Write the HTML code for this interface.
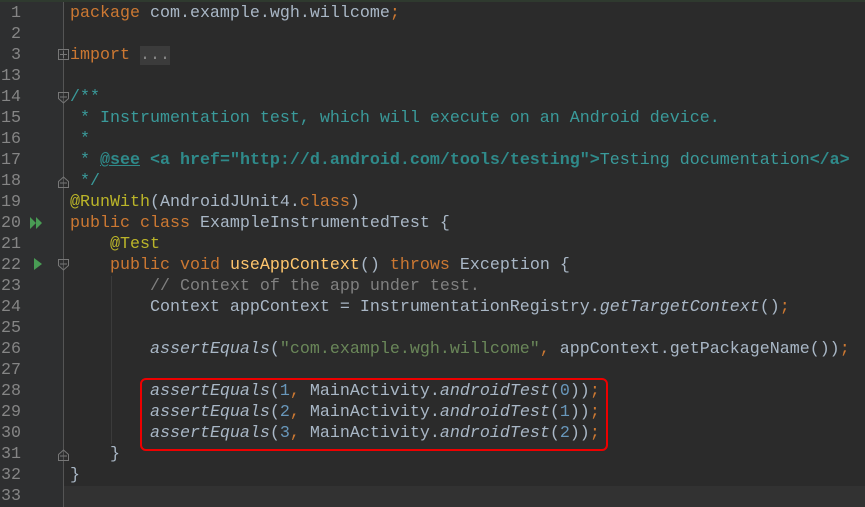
<!DOCTYPE html>
<html><head><style>
body{margin:0;width:865px;height:507px;background:#2b2b2b;overflow:hidden;position:relative;font-family:"Liberation Mono",monospace;font-size:16.67px}
#top{position:absolute;left:0;top:0;width:865px;height:2px;background:#2f3a2f}
#gut{position:absolute;left:0;top:2px;width:63px;height:505px;background:#2e2f30}
#sep{position:absolute;left:63px;top:2px;width:1px;height:505px;background:#555}
#hl{position:absolute;left:64px;top:486px;width:801px;height:21px;background:#323232}
.n{position:absolute;left:0;width:21px;text-align:right;color:#858585;line-height:21px;font-size:16.67px}
.l{position:absolute;left:70px;line-height:21px;white-space:pre;color:#a9b7c6}
.k{color:#cc7832}.d{color:#3a9a9a}.t{color:#2f8a8a;font-weight:bold}.a{color:#bbb529}.c{color:#808080}.i{font-style:italic}.s{color:#6a8759}.num{color:#6897bb}.f{color:#ffc66d}
#box{position:absolute;left:140px;top:378px;width:464px;height:69px;border:2px solid #e00;border-radius:6px}
.ig{position:absolute;width:1px;background:#3b3b3b}
</style></head><body>
<div id="top"></div><div id="gut"></div><div id="hl"></div><div id="sep"></div>
<div class="ig" style="left:111px;top:276px;height:168px"></div>
<div class="n" style="top:3px">1</div>
<div class="n" style="top:24px">2</div>
<div class="n" style="top:45px">3</div>
<div class="n" style="top:66px">13</div>
<div class="n" style="top:87px">14</div>
<div class="n" style="top:108px">15</div>
<div class="n" style="top:129px">16</div>
<div class="n" style="top:150px">17</div>
<div class="n" style="top:171px">18</div>
<div class="n" style="top:192px">19</div>
<div class="n" style="top:213px">20</div>
<div class="n" style="top:234px">21</div>
<div class="n" style="top:255px">22</div>
<div class="n" style="top:276px">23</div>
<div class="n" style="top:297px">24</div>
<div class="n" style="top:318px">25</div>
<div class="n" style="top:339px">26</div>
<div class="n" style="top:360px">27</div>
<div class="n" style="top:381px">28</div>
<div class="n" style="top:402px">29</div>
<div class="n" style="top:423px">30</div>
<div class="n" style="top:444px">31</div>
<div class="n" style="top:465px">32</div>
<div class="n" style="top:486px">33</div>
<svg style="position:absolute;left:0;top:0" width="70" height="507">
<path d="M30 217 L36 223 L30 229 Z M36 217 L42 223 L36 229 Z" fill="#499c54"/>
<path d="M34 258 L42 264 L34 270 Z" fill="#499c54"/>
<g fill="none" stroke="#777" stroke-width="1">
<rect x="58.5" y="49.5" width="10" height="10"/><path d="M60 54.5h7M63.5 51v7"/>
<path d="M58.5 92.5h10v6l-5 4.5l-5-4.5z M60 97h7"/>
<path d="M58.5 187.5h10v-6l-5-4.5l-5 4.5z M60 183h7"/>
<path d="M58.5 259.5h10v6l-5 4.5l-5-4.5z M60 264h7"/>
<path d="M58.5 460.5h10v-6l-5-4.5l-5 4.5z M60 456h7"/>
</g></svg>
<div class="l" style="top:3px"><span class="k">package</span> com.example.wgh.willcome<span class="k">;</span></div>
<div class="l" style="top:45px"><span class="k">import</span> <span style="background:#3b3b3b;color:#888">...</span></div>
<div class="l d" style="top:87px">/**</div>
<div class="l d" style="top:108px"> * Instrumentation test, which will execute on an Android device.</div>
<div class="l d" style="top:129px"> *</div>
<div class="l d" style="top:150px"> * <span class="t" style="text-decoration:underline">@see</span> <span class="t">&lt;a href="http://d.android.com/tools/testing"&gt;</span>Testing documentation<span class="t">&lt;/a&gt;</span></div>
<div class="l d" style="top:171px"> */</div>
<div class="l" style="top:192px"><span class="a">@RunWith</span>(AndroidJUnit4.<span class="k">class</span>)</div>
<div class="l" style="top:213px"><span class="k">public class</span> ExampleInstrumentedTest {</div>
<div class="l" style="top:234px">    <span class="a">@Test</span></div>
<div class="l" style="top:255px">    <span class="k">public void</span> <span class="f">useAppContext</span>() <span class="k">throws</span> Exception {</div>
<div class="l" style="top:276px">        <span class="c">// Context of the app under test.</span></div>
<div class="l" style="top:297px">        Context appContext = InstrumentationRegistry.<span class="i">getTargetContext</span>()<span class="k">;</span></div>
<div class="l" style="top:339px">        <span class="i">assertEquals</span>(<span class="s">"com.example.wgh.willcome"</span><span class="k">,</span> appContext.getPackageName())<span class="k">;</span></div>
<div class="l" style="top:381px">        <span class="i">assertEquals</span>(<span class="num">1</span><span class="k">,</span> MainActivity.<span class="i">androidTest</span>(<span class="num">0</span>))<span class="k">;</span></div>
<div class="l" style="top:402px">        <span class="i">assertEquals</span>(<span class="num">2</span><span class="k">,</span> MainActivity.<span class="i">androidTest</span>(<span class="num">1</span>))<span class="k">;</span></div>
<div class="l" style="top:423px">        <span class="i">assertEquals</span>(<span class="num">3</span><span class="k">,</span> MainActivity.<span class="i">androidTest</span>(<span class="num">2</span>))<span class="k">;</span></div>
<div class="l" style="top:444px">    }</div>
<div class="l" style="top:465px">}</div>
<div id="box"></div>
</body></html>
